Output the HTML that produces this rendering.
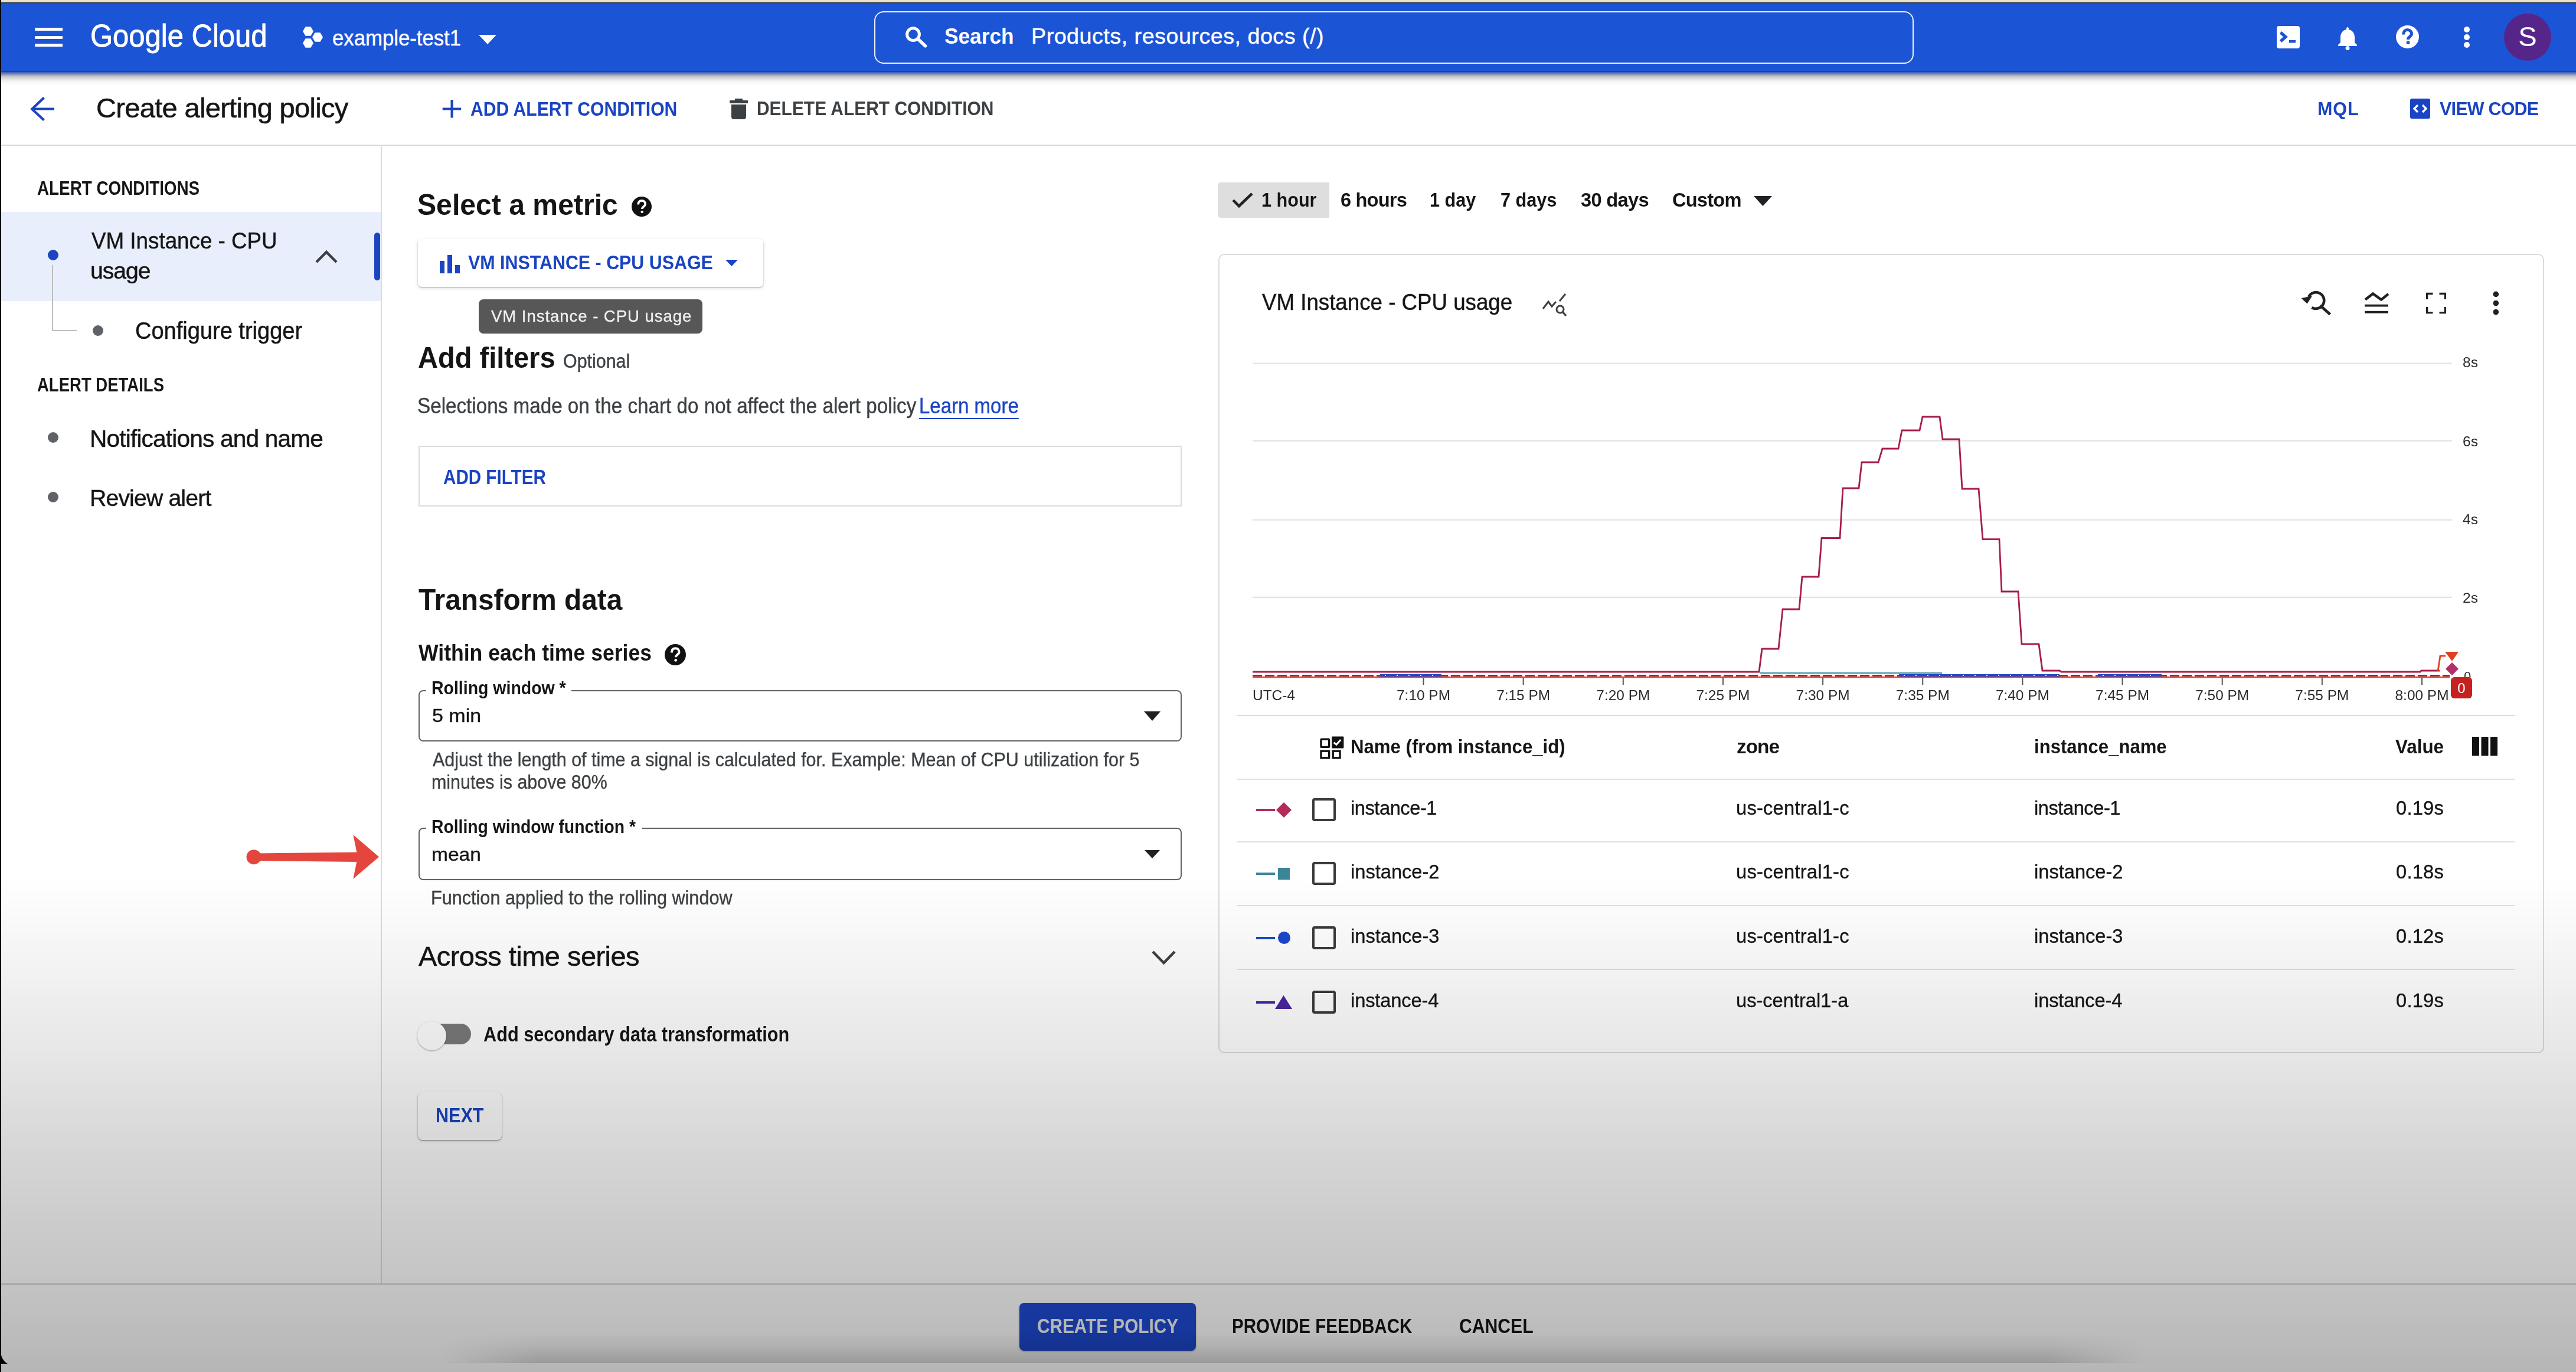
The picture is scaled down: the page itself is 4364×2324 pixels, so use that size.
<!DOCTYPE html><html><head><meta charset="utf-8"><title>Create alerting policy</title><style>
html,body{margin:0;padding:0}
body{width:4364px;height:2324px;overflow:hidden;background:#fff;position:relative;font-family:"Liberation Sans",sans-serif}
.a{position:absolute;display:block}
.t{position:absolute;white-space:nowrap;transform-origin:0 0}
</style></head><body><div class="a" style="left:0;top:0;width:4364px;height:2324px;overflow:hidden;filter:blur(0.6px)">
<div class="a" style="left:0px;top:0px;width:4364px;height:122px;background:#1c54d6"></div>
<div class="a" style="left:0px;top:120px;width:4364px;height:26px;background:linear-gradient(to bottom,rgba(20,60,190,1) 0px,rgba(40,70,160,.75) 4px,rgba(60,60,70,.32) 9px,rgba(0,0,0,.16) 12px,rgba(0,0,0,.05) 17px,rgba(0,0,0,0) 24px)"></div>
<div class="a" style="left:0px;top:0px;width:4364px;height:3px;background:#ece5cc"></div>
<div class="a" style="left:0px;top:3px;width:4364px;height:3px;background:linear-gradient(#6d6a55,#2c3f78)"></div>
<div class="a" style="left:59px;top:47px;width:47px;height:5px;background:#fff"></div>
<div class="a" style="left:59px;top:61px;width:47px;height:5px;background:#fff"></div>
<div class="a" style="left:59px;top:74px;width:47px;height:5px;background:#fff"></div>
<div class="t" style="left:153.24px;top:33.67px;font-size:53.33px;line-height:53.33px;color:#ffffff;transform:scaleX(0.9187);-webkit-text-stroke:0.8px #ffffff;">Google Cloud</div>
<svg class="a" style="left:510px;top:43px;" width="40" height="42" viewBox="0 0 40 42"><polygon points="21.0,10.0 16.5,17.8 7.5,17.8 3.0,10.0 7.5,2.2 16.5,2.2" fill="#fff"/><polygon points="37.0,20.0 32.5,27.8 23.5,27.8 19.0,20.0 23.5,12.2 32.5,12.2" fill="#fff"/><polygon points="21.0,30.0 16.5,37.8 7.5,37.8 3.0,30.0 7.5,22.2 16.5,22.2" fill="#fff"/></svg>
<div class="t" style="left:563.12px;top:45.57px;font-size:36.98px;line-height:36.98px;color:#ffffff;-webkit-text-stroke:0.44px #ffffff;transform:scaleX(0.9389);">example-test1</div>
<svg class="a" style="left:811px;top:59px;" width="30" height="16" viewBox="0 0 30 16"><polygon points="0,0 30,0 15,16" fill="#fff"/></svg>
<div class="a" style="left:1481px;top:19px;width:1761px;height:89px;box-sizing:border-box;border:2px solid rgba(255,255,255,.92);border-radius:16px"></div>
<svg class="a" style="left:1532px;top:44px;" width="40" height="40" viewBox="0 0 40 40"><circle cx="15" cy="14.2" r="10.4" fill="none" stroke="#fff" stroke-width="5"/><line x1="23.5" y1="22.5" x2="35.5" y2="33.8" stroke="#fff" stroke-width="5.5" stroke-linecap="round"/></svg>
<div class="t" style="left:1600.07px;top:42.97px;font-size:37.68px;line-height:37.68px;color:#ffffff;font-weight:bold;transform:scaleX(0.9350);">Search</div>
<div class="t" style="left:1747.00px;top:42.97px;font-size:37.68px;line-height:37.68px;color:#ffffff;-webkit-text-stroke:0.45px #ffffff;letter-spacing:0.500px;">Products, resources, docs (/)</div>
<svg class="a" style="left:3857px;top:44px;" width="39" height="38" viewBox="0 0 39 38"><rect x="0" y="0" width="39" height="38" rx="4" fill="#fff"/><polyline points="6.5,11 15,18.5 6.5,26" fill="none" stroke="#1c54d6" stroke-width="5.2"/><rect x="21" y="24" width="11" height="4.5" fill="#1c54d6"/></svg>
<svg class="a" style="left:3959px;top:44px;" width="36" height="41" viewBox="0 0 36 41"><path d="M18 2 C17 2 16 3 16 4 L16 6 C9 7.5 6 13 6 19 L6 28 L2 32 L2 34 L34 34 L34 32 L30 28 L30 19 C30 13 27 7.5 20 6 L20 4 C20 3 19 2 18 2 Z" fill="#fff"/><circle cx="18" cy="37.5" r="3.5" fill="#fff"/></svg>
<svg class="a" style="left:4059px;top:43px;" width="39" height="39" viewBox="0 0 39 39"><circle cx="19.5" cy="19.5" r="19.5" fill="#fff"/><path d="M12.5 15.5 C12.5 10.5 15.5 7.5 19.5 7.5 C23.5 7.5 26.5 10.5 26.5 14 C26.5 19 20.5 19 20.5 24" fill="none" stroke="#1c54d6" stroke-width="5"/><rect x="17.8" y="26.5" width="5.4" height="5.4" fill="#1c54d6"/></svg>
<svg class="a" style="left:4171px;top:45px;" width="16" height="36" viewBox="0 0 16 36"><circle cx="8" cy="5" r="5" fill="#fff"/><circle cx="8" cy="18" r="5" fill="#fff"/><circle cx="8" cy="31" r="5" fill="#fff"/></svg>
<div class="a" style="left:4242px;top:23px;width:80px;height:80px;background:#55258a;border-radius:50%"></div>
<div class="t" style="left:4265px;top:20px;font-size:47px;line-height:84px;color:#fff;width:34px;text-align:center">S</div>
<svg class="a" style="left:51px;top:163px;" width="44" height="43" viewBox="0 0 44 43"><polyline points="23.5,2.5 3.2,21.7 23.5,40.5" fill="none" stroke="#1a44c2" stroke-width="4.2"/><line x1="4" y1="21.5" x2="41" y2="21.5" stroke="#1a44c2" stroke-width="4.2"/></svg>
<div class="t" style="left:163.00px;top:158.96px;font-size:47.10px;line-height:47.10px;color:#151515;-webkit-text-stroke:0.57px #151515;letter-spacing:-0.714px;">Create alerting policy</div>
<svg class="a" style="left:749px;top:169px;" width="33" height="31" viewBox="0 0 33 31"><rect x="14.5" y="0" width="4.2" height="30.5" fill="#1a44c2"/><rect x="0.7" y="13.5" width="31.5" height="3.9" fill="#1a44c2"/></svg>
<div class="t" style="left:797.10px;top:167.67px;font-size:33.33px;line-height:33.33px;color:#1a44c2;font-weight:bold;transform:scaleX(0.9039);">ADD ALERT CONDITION</div>
<svg class="a" style="left:1236px;top:167px;" width="31" height="35" viewBox="0 0 31 35"><rect x="9" y="0" width="13" height="4" rx="1" fill="#3c4043"/><rect x="0" y="3" width="31" height="5" rx="1" fill="#3c4043"/><path d="M3 10 H28 V31 C28 33 26.5 35 24.5 35 H6.5 C4.5 35 3 33 3 31 Z" fill="#3c4043"/></svg>
<div class="t" style="left:1282.20px;top:167.17px;font-size:33.33px;line-height:33.33px;color:#3c4043;font-weight:bold;transform:scaleX(0.8984);">DELETE ALERT CONDITION</div>
<div class="t" style="left:3926.00px;top:169.13px;font-size:30.43px;line-height:30.43px;color:#1a44c2;font-weight:bold;letter-spacing:1.000px;">MQL</div>
<svg class="a" style="left:4083px;top:167px;" width="34" height="34" viewBox="0 0 34 34"><rect x="0" y="0" width="34" height="34" rx="3" fill="#1a44c2"/><polyline points="13,11 7,17 13,23" fill="none" stroke="#fff" stroke-width="3.4"/><polyline points="21,11 27,17 21,23" fill="none" stroke="#fff" stroke-width="3.4"/></svg>
<div class="t" style="left:4133.00px;top:169.13px;font-size:30.43px;line-height:30.43px;color:#1a44c2;font-weight:bold;letter-spacing:-0.750px;">VIEW CODE</div>
<div class="a" style="left:0px;top:245px;width:4364px;height:2px;background:#d9d9d9"></div>
<div class="a" style="left:645px;top:247px;width:2px;height:1928px;background:#dadce0"></div>
<div class="t" style="left:63.17px;top:301.67px;font-size:33.33px;line-height:33.33px;color:#151515;font-weight:bold;transform:scaleX(0.8349);">ALERT CONDITIONS</div>
<div class="a" style="left:2px;top:359px;width:643px;height:151px;background:#e8eefb"></div>
<div class="a" style="left:81px;top:423px;width:18px;height:18px;background:#1a44c2;border-radius:50%"></div>
<div class="a" style="left:88px;top:449px;width:2px;height:112px;background:#bdbdbd"></div>
<div class="a" style="left:88px;top:559px;width:42px;height:2px;background:#bdbdbd"></div>
<div class="t" style="left:155.00px;top:388.24px;font-size:39.13px;line-height:39.13px;color:#151515;-webkit-text-stroke:0.47px #151515;transform:scaleX(0.9398);">VM Instance - CPU</div>
<div class="t" style="left:153.00px;top:439.34px;font-size:39.13px;line-height:39.13px;color:#151515;-webkit-text-stroke:0.47px #151515;letter-spacing:-1.000px;">usage</div>
<svg class="a" style="left:533px;top:423px;" width="40" height="24" viewBox="0 0 40 24"><polyline points="3,21 20,4 37,21" fill="none" stroke="#3c4043" stroke-width="4.5"/></svg>
<div class="a" style="left:634px;top:394px;width:10px;height:81px;background:#1a44c2;border-radius:5px"></div>
<div class="a" style="left:157px;top:551px;width:18px;height:18px;background:#5f6368;border-radius:50%"></div>
<div class="t" style="left:229.13px;top:540.01px;font-size:40.58px;line-height:40.58px;color:#151515;-webkit-text-stroke:0.49px #151515;transform:scaleX(0.9367);">Configure trigger</div>
<div class="t" style="left:63.17px;top:635.17px;font-size:33.33px;line-height:33.33px;color:#151515;font-weight:bold;transform:scaleX(0.8256);">ALERT DETAILS</div>
<div class="a" style="left:81px;top:732px;width:18px;height:18px;background:#5f6368;border-radius:50%"></div>
<div class="t" style="left:152.00px;top:722.51px;font-size:40.58px;line-height:40.58px;color:#151515;-webkit-text-stroke:0.49px #151515;letter-spacing:-0.810px;">Notifications and name</div>
<div class="a" style="left:81px;top:833px;width:18px;height:18px;background:#5f6368;border-radius:50%"></div>
<div class="t" style="left:152.00px;top:823.74px;font-size:39.13px;line-height:39.13px;color:#151515;-webkit-text-stroke:0.47px #151515;letter-spacing:-0.818px;">Review alert</div>
<div class="t" style="left:707.10px;top:321.88px;font-size:50.72px;line-height:50.72px;color:#151515;font-weight:bold;transform:scaleX(0.9492);">Select a metric</div>
<svg class="a" style="left:1070px;top:333px;" width="34" height="34" viewBox="0 0 34 34"><circle cx="17" cy="17" r="17" fill="#111"/><path d="M11.22 13.6 C11.22 8.16 14.28 6.8 17.34 6.8 C21.08 6.8 23.12 9.52 23.12 12.58 C23.12 17 17.68 17 17.68 21.08" fill="none" stroke="#fff" stroke-width="3.74"/><circle cx="17.68" cy="25.84" r="2.21" fill="#fff"/></svg>
<div class="a" style="left:708px;top:405px;width:585px;height:81px;background:#fff;border-radius:6px;box-shadow:0 1px 2px rgba(0,0,0,.28),0 2px 6px rgba(0,0,0,.12)"></div>
<svg class="a" style="left:745px;top:432px;" width="34" height="31" viewBox="0 0 34 31"><rect x="0" y="10" width="8" height="21" fill="#1a44c2"/><rect x="13" y="0" width="8" height="31" fill="#1a44c2"/><rect x="26" y="17" width="8" height="14" fill="#1a44c2"/></svg>
<div class="t" style="left:793.00px;top:428.27px;font-size:33.33px;line-height:33.33px;color:#1a44c2;font-weight:bold;transform:scaleX(0.9119);">VM INSTANCE - CPU USAGE</div>
<svg class="a" style="left:1229px;top:440px;" width="21" height="11" viewBox="0 0 21 11"><polygon points="0,0 21,0 10.5,11" fill="#1a44c2"/></svg>
<div class="a" style="left:811px;top:507px;width:379px;height:58px;background:#575757;border-radius:8px"></div>
<div class="t" style="left:832.00px;top:521.59px;font-size:27.54px;line-height:27.54px;color:#f1f1f1;-webkit-text-stroke:0.33px #f1f1f1;letter-spacing:0.955px;">VM Instance - CPU usage</div>
<div class="t" style="left:708.07px;top:580.88px;font-size:50.72px;line-height:50.72px;color:#151515;font-weight:bold;transform:scaleX(0.9274);">Add filters</div>
<div class="t" style="left:954.07px;top:596.28px;font-size:32.61px;line-height:32.61px;color:#3c4043;-webkit-text-stroke:0.39px #3c4043;transform:scaleX(0.9328);">Optional</div>
<div class="t" style="left:707.17px;top:670.20px;font-size:36.23px;line-height:36.23px;color:#3c4043;-webkit-text-stroke:0.43px #3c4043;transform:scaleX(0.9173);">Selections made on the chart do not affect the alert policy</div>
<div class="t" style="left:1557.27px;top:670.20px;font-size:36.23px;line-height:36.23px;color:#1a44c2;-webkit-text-stroke:0.43px #1a44c2;transform:scaleX(0.9116);text-decoration:underline;text-underline-offset:8px;text-decoration-thickness:2px;">Learn more</div>
<div class="a" style="left:709px;top:755px;width:1293px;height:103px;box-sizing:border-box;border:2px solid #dadce0"></div>
<div class="t" style="left:751.15px;top:791.03px;font-size:34.78px;line-height:34.78px;color:#1a44c2;font-weight:bold;transform:scaleX(0.8515);">ADD FILTER</div>
<div class="t" style="left:709.00px;top:990.90px;font-size:50.00px;line-height:50.00px;color:#151515;font-weight:bold;transform:scaleX(0.9558);">Transform data</div>
<div class="t" style="left:709.00px;top:1086.83px;font-size:38.55px;line-height:38.55px;color:#151515;font-weight:bold;transform:scaleX(0.9227);">Within each time series</div>
<svg class="a" style="left:1126px;top:1091px;" width="36" height="36" viewBox="0 0 36 36"><circle cx="18" cy="18" r="18" fill="#111"/><path d="M11.88 14.4 C11.88 8.64 15.12 7.2 18.36 7.2 C22.32 7.2 24.48 10.08 24.48 13.32 C24.48 18 18.72 18 18.72 22.32" fill="none" stroke="#fff" stroke-width="3.96"/><circle cx="18.72" cy="27.36" r="2.34" fill="#fff"/></svg>
<div class="a" style="left:709px;top:1169px;width:1293px;height:87px;box-sizing:border-box;border:2px solid #5f6368;border-radius:8px"></div>
<div class="a" style="left:722px;top:1160px;width:246px;height:14px;background:#fff"></div>
<div class="t" style="left:731.16px;top:1150.76px;font-size:30.87px;line-height:30.87px;color:#151515;font-weight:bold;transform:scaleX(0.9224);">Rolling window *</div>
<div class="t" style="left:731.93px;top:1196.90px;font-size:31.88px;line-height:31.88px;color:#151515;-webkit-text-stroke:0.38px #151515;transform:scaleX(1.0667);">5 min</div>
<svg class="a" style="left:1938px;top:1205px;" width="28" height="16" viewBox="0 0 28 16"><polygon points="0,0 28,0 14,16" fill="#202124"/></svg>
<div class="t" style="left:733.00px;top:1269.67px;font-size:33.33px;line-height:33.33px;color:#3c4043;-webkit-text-stroke:0.4px #3c4043;transform:scaleX(0.9130);">Adjust the length of time a signal is calculated for. Example: Mean of CPU utilization for 5</div>
<div class="t" style="left:731.17px;top:1308.27px;font-size:33.33px;line-height:33.33px;color:#3c4043;-webkit-text-stroke:0.4px #3c4043;transform:scaleX(0.9130);">minutes is above 80%</div>
<div class="a" style="left:709px;top:1402px;width:1293px;height:89px;box-sizing:border-box;border:2px solid #5f6368;border-radius:8px"></div>
<div class="a" style="left:722px;top:1393px;width:366px;height:14px;background:#fff"></div>
<div class="t" style="left:731.17px;top:1385.76px;font-size:30.87px;line-height:30.87px;color:#151515;font-weight:bold;transform:scaleX(0.9173);">Rolling window function *</div>
<div class="t" style="left:730.89px;top:1432.40px;font-size:31.88px;line-height:31.88px;color:#151515;-webkit-text-stroke:0.38px #151515;transform:scaleX(1.0526);">mean</div>
<svg class="a" style="left:1939px;top:1440px;" width="26" height="14" viewBox="0 0 26 14"><polygon points="0,0 26,0 13,14" fill="#202124"/></svg>
<div class="t" style="left:730.24px;top:1503.67px;font-size:33.33px;line-height:33.33px;color:#3c4043;-webkit-text-stroke:0.4px #3c4043;transform:scaleX(0.9186);">Function applied to the rolling window</div>
<div class="t" style="left:709.00px;top:1597.09px;font-size:46.96px;line-height:46.96px;color:#151515;-webkit-text-stroke:0.56px #151515;letter-spacing:-0.529px;">Across time series</div>
<svg class="a" style="left:1950px;top:1608px;" width="43" height="27" viewBox="0 0 43 27"><polyline points="3,4 21.5,23 40,4" fill="none" stroke="#3c4043" stroke-width="4.5"/></svg>
<div class="a" style="left:730px;top:1734px;width:68px;height:35px;background:#7b7b7b;border-radius:18px"></div>
<div class="a" style="left:707px;top:1730px;width:49px;height:49px;background:#fff;border-radius:50%;box-shadow:0 1px 3px rgba(0,0,0,.35)"></div>
<div class="t" style="left:819.14px;top:1735.32px;font-size:35.51px;line-height:35.51px;color:#151515;font-weight:bold;transform:scaleX(0.8643);">Add secondary data transformation</div>
<div class="a" style="left:708px;top:1850px;width:142px;height:81px;background:#fff;border-radius:8px;box-shadow:0 1px 2px rgba(0,0,0,.35),0 2px 5px rgba(0,0,0,.15)"></div>
<div class="t" style="left:738.21px;top:1872.23px;font-size:34.20px;line-height:34.20px;color:#1a44c2;font-weight:bold;transform:scaleX(0.8933);">NEXT</div>
<svg class="a" style="left:415px;top:1410px;" width="235" height="84" viewBox="0 0 235 84"><circle cx="15" cy="41.7" r="12.5" fill="#e4463d"/><polygon points="15,35.4 193,33.5 193,50 15,48" fill="#e4463d"/><polygon points="183.3,4 227,41.5 183.3,78.8 191,41.5" fill="#e4463d"/></svg>
<div class="a" style="left:2063px;top:309px;width:189px;height:60px;background:#dedede;border-radius:5px 0 0 5px"></div>
<svg class="a" style="left:2086px;top:325px;" width="38" height="28" viewBox="0 0 38 28"><polyline points="3,14 13,24 35,3" fill="none" stroke="#202124" stroke-width="4.5"/></svg>
<div class="t" style="left:2137.12px;top:323.28px;font-size:32.61px;line-height:32.61px;color:#151515;font-weight:bold;transform:scaleX(0.9381);">1 hour</div>
<div class="t" style="left:2271.00px;top:323.28px;font-size:32.61px;line-height:32.61px;color:#151515;font-weight:bold;letter-spacing:-0.833px;">6 hours</div>
<div class="t" style="left:2422.12px;top:323.28px;font-size:32.61px;line-height:32.61px;color:#151515;font-weight:bold;transform:scaleX(0.9383);">1 day</div>
<div class="t" style="left:2542.06px;top:323.28px;font-size:32.61px;line-height:32.61px;color:#151515;font-weight:bold;transform:scaleX(0.9394);">7 days</div>
<div class="t" style="left:2678.00px;top:323.28px;font-size:32.61px;line-height:32.61px;color:#151515;font-weight:bold;letter-spacing:-0.667px;">30 days</div>
<div class="t" style="left:2833.00px;top:323.28px;font-size:32.61px;line-height:32.61px;color:#151515;font-weight:bold;letter-spacing:-0.800px;">Custom</div>
<svg class="a" style="left:2971px;top:332px;" width="31" height="17" viewBox="0 0 31 17"><polygon points="0,0 31,0 15.5,17" fill="#202124"/></svg>
<div class="a" style="left:2064px;top:430px;width:2246px;height:1354px;box-sizing:border-box;border:2px solid #dadce0;border-radius:10px"></div>
<div class="t" style="left:2138.00px;top:492.81px;font-size:38.70px;line-height:38.70px;color:#151515;-webkit-text-stroke:0.46px #151515;transform:scaleX(0.9484);">VM Instance - CPU usage</div>
<svg class="a" style="left:2612px;top:497px;" width="43" height="40" viewBox="0 0 43 40"><polyline points="2,26 11,14 17,22 24,14" fill="none" stroke="#3c4043" stroke-width="3"/><line x1="30" y1="13" x2="40" y2="1" stroke="#3c4043" stroke-width="3"/><circle cx="31" cy="27" r="6" fill="none" stroke="#3c4043" stroke-width="3"/><line x1="35" y1="31" x2="41" y2="38" stroke="#3c4043" stroke-width="3.4"/></svg>
<svg class="a" style="left:3895px;top:485px;" width="60" height="55" viewBox="0 0 60 55"><path d="M21.4 35.9 A13.8 13.8 0 1 0 16 18" fill="none" stroke="#202124" stroke-width="4.6"/><polygon points="3.5,20 22,16.5 13.5,29.5" fill="#202124"/><line x1="35.5" y1="32.5" x2="52.5" y2="47.5" stroke="#202124" stroke-width="4.8"/></svg>
<svg class="a" style="left:4000px;top:490px;" width="52" height="46" viewBox="0 0 52 46"><polyline points="7,17.6 20,7.5 34,17.6 46,8" fill="none" stroke="#202124" stroke-width="4.4"/><rect x="6" y="25.7" width="40" height="3.8" fill="#202124"/><rect x="6" y="36.8" width="40" height="3.8" fill="#202124"/></svg>
<svg class="a" style="left:4105px;top:490px;" width="48" height="48" viewBox="0 0 48 48"><path d="M6.6 17 V7.4 H16.5 M27.5 7.4 H37.4 V17 M37.4 30 V39.6 H27.5 M16.5 39.6 H6.6 V30" fill="none" stroke="#202124" stroke-width="3.3"/></svg>
<svg class="a" style="left:4218px;top:488px;" width="22" height="50" viewBox="0 0 22 50"><circle cx="10.3" cy="10.4" r="4.8" fill="#202124"/><circle cx="10.3" cy="25.5" r="4.8" fill="#202124"/><circle cx="10.3" cy="40.6" r="4.8" fill="#202124"/></svg>
<svg class="a" style="left:0;top:0;font-family:'Liberation Sans',sans-serif" width="4364" height="2324" viewBox="0 0 4364 2324"><line x1="2122" y1="615.5" x2="4154" y2="615.5" stroke="#e3e3e3" stroke-width="2.2"/><line x1="2122" y1="746.7" x2="4154" y2="746.7" stroke="#e3e3e3" stroke-width="2.2"/><line x1="2122" y1="880.7" x2="4154" y2="880.7" stroke="#e3e3e3" stroke-width="2.2"/><line x1="2122" y1="1011.9" x2="4154" y2="1011.9" stroke="#e3e3e3" stroke-width="2.2"/><line x1="2411.5" y1="1147" x2="2411.5" y2="1160" stroke="#555" stroke-width="2"/><text x="2411.5" y="1186" text-anchor="middle" font-size="24.6" fill="#2b2b2b" textLength="91" lengthAdjust="spacingAndGlyphs">7:10 PM</text><line x1="2580.65" y1="1147" x2="2580.65" y2="1160" stroke="#555" stroke-width="2"/><text x="2580.65" y="1186" text-anchor="middle" font-size="24.6" fill="#2b2b2b" textLength="91" lengthAdjust="spacingAndGlyphs">7:15 PM</text><line x1="2749.8" y1="1147" x2="2749.8" y2="1160" stroke="#555" stroke-width="2"/><text x="2749.8" y="1186" text-anchor="middle" font-size="24.6" fill="#2b2b2b" textLength="91" lengthAdjust="spacingAndGlyphs">7:20 PM</text><line x1="2918.95" y1="1147" x2="2918.95" y2="1160" stroke="#555" stroke-width="2"/><text x="2918.95" y="1186" text-anchor="middle" font-size="24.6" fill="#2b2b2b" textLength="91" lengthAdjust="spacingAndGlyphs">7:25 PM</text><line x1="3088.1" y1="1147" x2="3088.1" y2="1160" stroke="#555" stroke-width="2"/><text x="3088.1" y="1186" text-anchor="middle" font-size="24.6" fill="#2b2b2b" textLength="91" lengthAdjust="spacingAndGlyphs">7:30 PM</text><line x1="3257.25" y1="1147" x2="3257.25" y2="1160" stroke="#555" stroke-width="2"/><text x="3257.25" y="1186" text-anchor="middle" font-size="24.6" fill="#2b2b2b" textLength="91" lengthAdjust="spacingAndGlyphs">7:35 PM</text><line x1="3426.4" y1="1147" x2="3426.4" y2="1160" stroke="#555" stroke-width="2"/><text x="3426.4" y="1186" text-anchor="middle" font-size="24.6" fill="#2b2b2b" textLength="91" lengthAdjust="spacingAndGlyphs">7:40 PM</text><line x1="3595.55" y1="1147" x2="3595.55" y2="1160" stroke="#555" stroke-width="2"/><text x="3595.55" y="1186" text-anchor="middle" font-size="24.6" fill="#2b2b2b" textLength="91" lengthAdjust="spacingAndGlyphs">7:45 PM</text><line x1="3764.7" y1="1147" x2="3764.7" y2="1160" stroke="#555" stroke-width="2"/><text x="3764.7" y="1186" text-anchor="middle" font-size="24.6" fill="#2b2b2b" textLength="91" lengthAdjust="spacingAndGlyphs">7:50 PM</text><line x1="3933.85" y1="1147" x2="3933.85" y2="1160" stroke="#555" stroke-width="2"/><text x="3933.85" y="1186" text-anchor="middle" font-size="24.6" fill="#2b2b2b" textLength="91" lengthAdjust="spacingAndGlyphs">7:55 PM</text><line x1="4103" y1="1147" x2="4103" y2="1160" stroke="#555" stroke-width="2"/><text x="4103" y="1186" text-anchor="middle" font-size="24.6" fill="#2b2b2b" textLength="91" lengthAdjust="spacingAndGlyphs">8:00 PM</text><text x="2122" y="1186" font-size="24.6" fill="#2b2b2b" textLength="72" lengthAdjust="spacingAndGlyphs">UTC-4</text><text x="4172" y="621.6" font-size="24.6" fill="#2b2b2b" textLength="26" lengthAdjust="spacingAndGlyphs">8s</text><text x="4172" y="755.9" font-size="24.6" fill="#2b2b2b" textLength="26" lengthAdjust="spacingAndGlyphs">6s</text><text x="4172" y="887.9" font-size="24.6" fill="#2b2b2b" textLength="26" lengthAdjust="spacingAndGlyphs">4s</text><text x="4172" y="1020.8" font-size="24.6" fill="#2b2b2b" textLength="26" lengthAdjust="spacingAndGlyphs">2s</text><text x="4174" y="1153" font-size="22" fill="#2b2b2b">0</text><line x1="2122" y1="1147" x2="4150" y2="1147" stroke="#ea4335" stroke-width="2.6"/><line x1="2122" y1="1144.5" x2="4150" y2="1144.5" stroke="#8f1d1d" stroke-width="2.6" stroke-dasharray="16 5"/><line x1="2338" y1="1144" x2="2442" y2="1144" stroke="#1b48c6" stroke-width="4"/><line x1="2346" y1="1144" x2="2442" y2="1144" stroke="#fff" stroke-width="2.2" stroke-dasharray="2 18"/><line x1="3217" y1="1144" x2="3489" y2="1144" stroke="#1b48c6" stroke-width="4"/><line x1="3225" y1="1144" x2="3489" y2="1144" stroke="#fff" stroke-width="2.2" stroke-dasharray="2 18"/><line x1="3554" y1="1144" x2="3662" y2="1144" stroke="#1b48c6" stroke-width="4"/><line x1="3562" y1="1144" x2="3662" y2="1144" stroke="#fff" stroke-width="2.2" stroke-dasharray="2 18"/><line x1="2982" y1="1140" x2="3290" y2="1140" stroke="#3d8a99" stroke-width="2"/><path d="M2122 1138 H2980 L2985 1099 H3013 L3020 1032 H3048 L3053 977 H3081 L3086 911.5 H3117 L3122 827 H3149 L3154 783 H3182 L3189 760 H3216 L3222 729 H3252 L3257 706 H3286 L3291 744 H3319 L3324 828 H3352 L3359 913.5 H3387 L3391 1002 H3419 L3425 1091 H3454 L3460 1136 H3489 L3492 1138 H4100 L4102 1136 H4133" fill="none" stroke="#a81c4a" stroke-width="2.8" stroke-linejoin="miter"/><path d="M4130 1137 L4134 1111 H4143" fill="none" stroke="#e0401e" stroke-width="2.8"/><polygon points="4142,1104 4165,1104 4154,1120" fill="#e0401e"/><polygon points="4154,1122 4165,1133 4154,1144 4143,1133" fill="#b0306a"/><rect x="4152" y="1147" width="36" height="36" rx="6" fill="#c5221f"/><text x="4170" y="1174" text-anchor="middle" font-size="24" fill="#fff">0</text><line x1="2096" y1="1212" x2="4261" y2="1212" stroke="#dadce0" stroke-width="2.2"/></svg>
<svg class="a" style="left:2236px;top:1247px;" width="42" height="40" viewBox="0 0 42 40"><rect x="2" y="5.3" width="13.6" height="13.1" rx="1" fill="none" stroke="#111" stroke-width="3.4"/><rect x="20.2" y="0.4" width="20.2" height="20.1" rx="1" fill="#111"/><polyline points="23.6,10.8 28.1,14.2 35.3,5.9" fill="none" stroke="#fff" stroke-width="3"/><rect x="2" y="25.2" width="13.6" height="11.6" fill="none" stroke="#111" stroke-width="3.4"/><rect x="22.2" y="25.2" width="11.8" height="11.6" fill="none" stroke="#111" stroke-width="3.4"/></svg>
<div class="t" style="left:2288.13px;top:1247.67px;font-size:33.33px;line-height:33.33px;color:#151515;font-weight:bold;transform:scaleX(0.9351);">Name (from instance_id)</div>
<div class="t" style="left:2942.00px;top:1247.67px;font-size:33.33px;line-height:33.33px;color:#151515;font-weight:bold;letter-spacing:-1.000px;">zone</div>
<div class="t" style="left:3446.13px;top:1247.67px;font-size:33.33px;line-height:33.33px;color:#151515;font-weight:bold;transform:scaleX(0.9328);">instance_name</div>
<div class="t" style="left:4058.00px;top:1247.67px;font-size:33.33px;line-height:33.33px;color:#151515;font-weight:bold;transform:scaleX(0.9419);">Value</div>
<svg class="a" style="left:4188px;top:1248px;" width="43" height="32" viewBox="0 0 43 32"><rect x="0" y="0" width="12" height="32" fill="#111"/><rect x="15.5" y="0" width="12" height="32" fill="#111"/><rect x="31" y="0" width="12" height="32" fill="#111"/></svg>
<div class="a" style="left:2096px;top:1319.4px;width:2164px;height:2px;background:#e0e0e0"></div>
<div class="a" style="left:2096px;top:1424.7px;width:2164px;height:2px;background:#e0e0e0"></div>
<div class="a" style="left:2096px;top:1533px;width:2164px;height:2px;background:#e0e0e0"></div>
<div class="a" style="left:2096px;top:1640.6px;width:2164px;height:2px;background:#e0e0e0"></div>
<div class="a" style="left:2128px;top:1369.7px;width:32px;height:4px;background:#b42a5a"></div>
<svg class="a" style="left:2162px;top:1358.7px;" width="26" height="26" viewBox="0 0 26 26"><polygon points="13,0 26,13 13,26 0,13" fill="#b42a5a"/></svg>
<div class="a" style="left:2223px;top:1352.2px;width:40px;height:39px;box-sizing:border-box;border:4px solid #3a3a3a;border-radius:4px"></div>
<div class="t" style="left:2288.00px;top:1353.28px;font-size:32.61px;line-height:32.61px;color:#151515;-webkit-text-stroke:0.39px #151515;letter-spacing:-0.444px;">instance-1</div>
<div class="t" style="left:2941.00px;top:1353.28px;font-size:32.61px;line-height:32.61px;color:#151515;-webkit-text-stroke:0.39px #151515;letter-spacing:0.250px;">us-central1-c</div>
<div class="t" style="left:3446.00px;top:1353.28px;font-size:32.61px;line-height:32.61px;color:#151515;-webkit-text-stroke:0.39px #151515;letter-spacing:-0.444px;">instance-1</div>
<div class="t" style="left:4059.00px;top:1353.28px;font-size:32.61px;line-height:32.61px;color:#151515;-webkit-text-stroke:0.39px #151515;letter-spacing:0.250px;">0.19s</div>
<div class="a" style="left:2128px;top:1477.6px;width:32px;height:4px;background:#3b8597"></div>
<div class="a" style="left:2165px;top:1469.6px;width:20px;height:20px;background:#3b8597"></div>
<div class="a" style="left:2223px;top:1460.1px;width:40px;height:39px;box-sizing:border-box;border:4px solid #3a3a3a;border-radius:4px"></div>
<div class="t" style="left:2288.00px;top:1461.28px;font-size:32.61px;line-height:32.61px;color:#151515;-webkit-text-stroke:0.39px #151515;">instance-2</div>
<div class="t" style="left:2941.00px;top:1461.28px;font-size:32.61px;line-height:32.61px;color:#151515;-webkit-text-stroke:0.39px #151515;letter-spacing:0.250px;">us-central1-c</div>
<div class="t" style="left:3446.00px;top:1461.28px;font-size:32.61px;line-height:32.61px;color:#151515;-webkit-text-stroke:0.39px #151515;">instance-2</div>
<div class="t" style="left:4059.00px;top:1461.28px;font-size:32.61px;line-height:32.61px;color:#151515;-webkit-text-stroke:0.39px #151515;letter-spacing:0.250px;">0.18s</div>
<div class="a" style="left:2128px;top:1586.5px;width:32px;height:4px;background:#1b47d0"></div>
<div class="a" style="left:2165px;top:1578px;width:21px;height:21px;background:#1b47d0;border-radius:50%"></div>
<div class="a" style="left:2223px;top:1569px;width:40px;height:39px;box-sizing:border-box;border:4px solid #3a3a3a;border-radius:4px"></div>
<div class="t" style="left:2288.00px;top:1570.28px;font-size:32.61px;line-height:32.61px;color:#151515;-webkit-text-stroke:0.39px #151515;">instance-3</div>
<div class="t" style="left:2941.00px;top:1570.28px;font-size:32.61px;line-height:32.61px;color:#151515;-webkit-text-stroke:0.39px #151515;letter-spacing:0.250px;">us-central1-c</div>
<div class="t" style="left:3446.00px;top:1570.28px;font-size:32.61px;line-height:32.61px;color:#151515;-webkit-text-stroke:0.39px #151515;">instance-3</div>
<div class="t" style="left:4059.00px;top:1570.28px;font-size:32.61px;line-height:32.61px;color:#151515;-webkit-text-stroke:0.39px #151515;letter-spacing:0.250px;">0.12s</div>
<div class="a" style="left:2128px;top:1695.8px;width:32px;height:4px;background:#4a27a0"></div>
<svg class="a" style="left:2160px;top:1685.8px;" width="29" height="23" viewBox="0 0 29 23"><polygon points="14.5,0 29,23 0,23" fill="#4a27a0"/></svg>
<div class="a" style="left:2223px;top:1678.3px;width:40px;height:39px;box-sizing:border-box;border:4px solid #3a3a3a;border-radius:4px"></div>
<div class="t" style="left:2288.00px;top:1679.28px;font-size:32.61px;line-height:32.61px;color:#151515;-webkit-text-stroke:0.39px #151515;letter-spacing:-0.111px;">instance-4</div>
<div class="t" style="left:2941.00px;top:1679.28px;font-size:32.61px;line-height:32.61px;color:#151515;-webkit-text-stroke:0.39px #151515;">us-central1-a</div>
<div class="t" style="left:3446.00px;top:1679.28px;font-size:32.61px;line-height:32.61px;color:#151515;-webkit-text-stroke:0.39px #151515;letter-spacing:-0.111px;">instance-4</div>
<div class="t" style="left:4059.00px;top:1679.28px;font-size:32.61px;line-height:32.61px;color:#151515;-webkit-text-stroke:0.39px #151515;letter-spacing:0.250px;">0.19s</div>
<div class="a" style="left:0px;top:2174px;width:4364px;height:2px;background:#cfcfcf"></div>
<div class="a" style="left:1727px;top:2207px;width:299px;height:81px;background:#1e4ad2;border-radius:8px;box-shadow:0 1px 3px rgba(0,0,0,.35)"></div>
<div class="t" style="left:1757.16px;top:2229.32px;font-size:35.51px;line-height:35.51px;color:#f4f4f4;font-weight:bold;transform:scaleX(0.8380);">CREATE POLICY</div>
<div class="t" style="left:2087.34px;top:2229.32px;font-size:35.51px;line-height:35.51px;color:#151515;font-weight:bold;transform:scaleX(0.8324);">PROVIDE FEEDBACK</div>
<div class="t" style="left:2472.15px;top:2229.32px;font-size:35.51px;line-height:35.51px;color:#151515;font-weight:bold;transform:scaleX(0.8493);">CANCEL</div>
<div class="a" style="left:0px;top:1480px;width:4364px;height:844px;background:linear-gradient(to bottom,rgba(0,0,0,0) 0%,rgba(0,0,0,.025) 9.5%,rgba(0,0,0,.10) 38%,rgba(0,0,0,.17) 58%,rgba(0,0,0,.225) 79%,rgba(0,0,0,.285) 100%)"></div>
<div class="a" style="left:740px;top:2255px;width:2900px;height:54px;background:linear-gradient(to bottom,rgba(0,0,0,0),rgba(0,0,0,.06) 50%,rgba(0,0,0,.17));-webkit-mask-image:linear-gradient(to right,transparent,#000 6%,#000 94%,transparent);mask-image:linear-gradient(to right,transparent,#000 6%,#000 94%,transparent)"></div>
<div class="a" style="left:0px;top:0px;width:2px;height:2324px;background:#000"></div>
<svg class="a" style="left:0px;top:2286px;" width="14" height="26" viewBox="0 0 14 26"><path d="M0 0 C2 14 6 20 13 24 L0 24 Z" fill="#000"/></svg>
</div></body></html>
